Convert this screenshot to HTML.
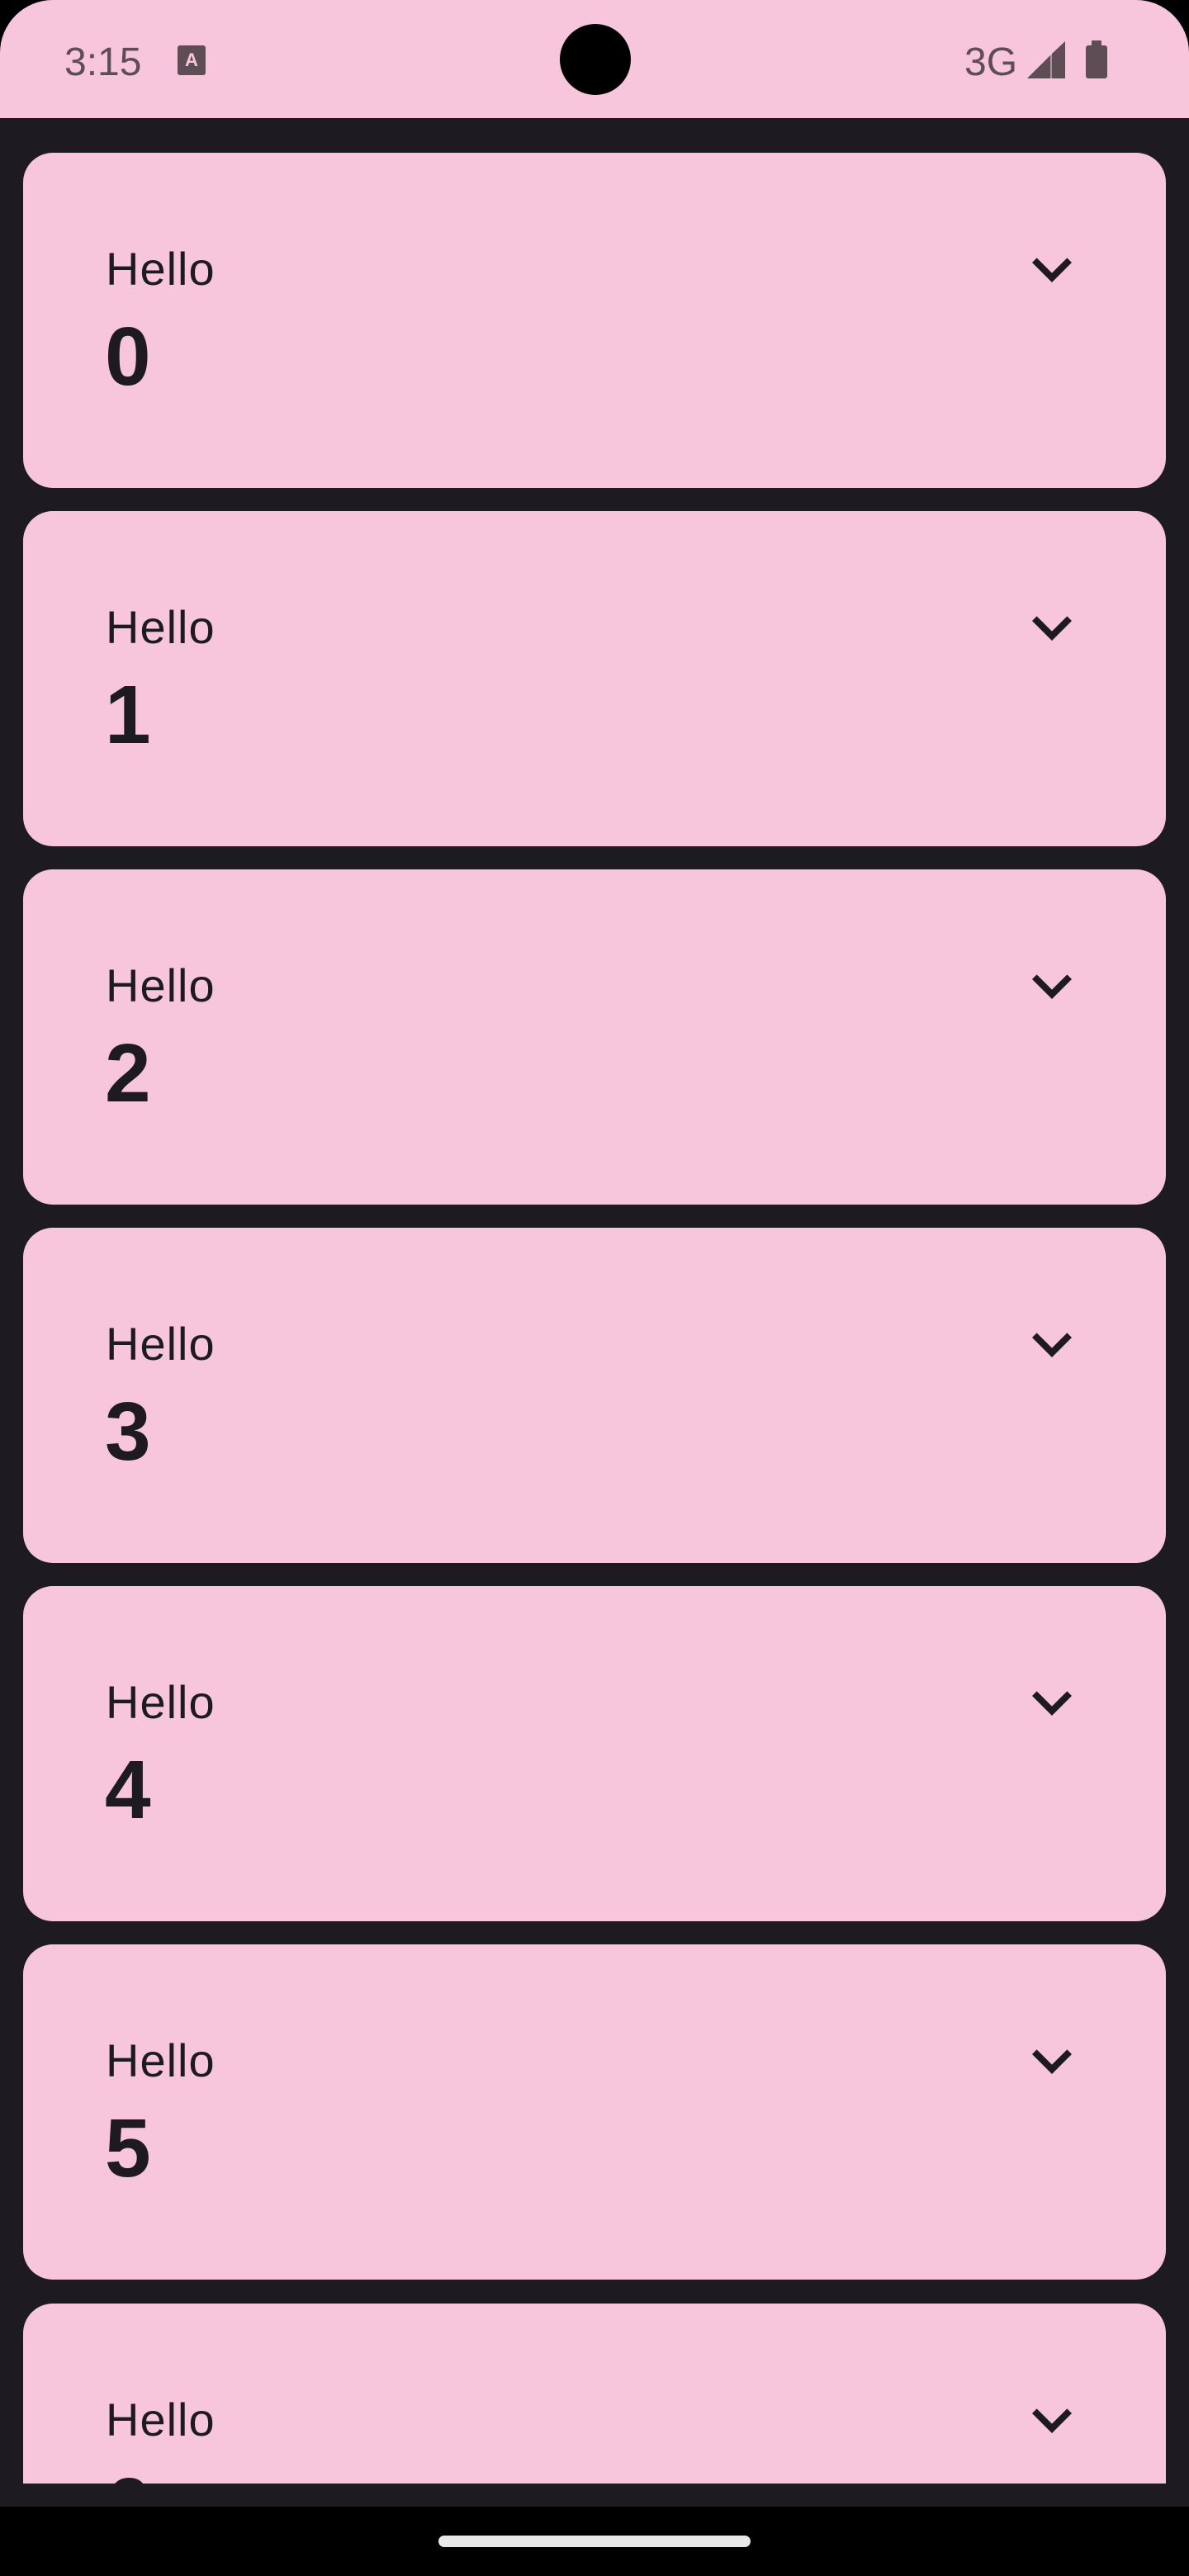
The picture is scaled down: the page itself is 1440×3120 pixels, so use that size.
<!DOCTYPE html>
<html><head><meta charset="utf-8"><style>
*{margin:0;padding:0;box-sizing:border-box}
body{width:1440px;height:3120px;background:#000;position:relative;overflow:hidden;font-family:"Liberation Sans",sans-serif}
.status{position:absolute;left:0;top:0;width:1440px;height:143px;background:#f7c6dc;border-radius:64px 64px 0 0}
.main{position:absolute;left:0;top:143px;width:1440px;height:2893px;background:#1d1b20;overflow:hidden}
.card{position:absolute;left:28px;width:1384px;height:406px;background:#f7c6dc;border-radius:36px}
.h{position:absolute;left:100px;top:113px;font-size:56px;line-height:1;color:#1d1b20;letter-spacing:1px}
.n{position:absolute;left:99px;top:197px;font-size:100px;font-weight:bold;line-height:1;color:#1d1b20}
.chev{position:absolute;left:1198px;top:93px}
.t{position:absolute;font-size:48px;line-height:1;color:#5f4d56}
</style></head><body>
<div class="status">
<div class="t" style="left:78px;top:52px">3:15</div>
<svg style="position:absolute;left:215px;top:55px" width="34" height="36" viewBox="0 0 34 36"><rect width="34" height="36" rx="3" fill="#5f4d56"/><text x="17" y="25" font-size="22" font-weight="bold" fill="#f7c6dc" text-anchor="middle" font-family="Liberation Sans">A</text></svg>
<div style="position:absolute;left:678px;top:29px;width:86px;height:86px;border-radius:50%;background:#000"></div>
<div class="t" style="left:1168px;top:52px">3G</div>
<svg style="position:absolute;left:1244px;top:50px" width="46" height="45" viewBox="0 0 46 45"><path d="M46 0V45H0Z" fill="#5f4d56" opacity=".45"/><path d="M46 0V45H30V15Z" fill="#5f4d56"/><path d="M28 17V45H0Z" fill="#5f4d56"/></svg>
<div style="position:absolute;left:1315px;top:55px;width:26px;height:40px;background:#5f4d56;border-radius:3px"></div>
<div style="position:absolute;left:1322px;top:49px;width:12px;height:8px;background:#5f4d56;border-radius:1px"></div>
</div>
<div class="main">
<div class="card" style="top:42px"><div class="h">Hello</div><div class="n">0</div><svg class="chev" width="96" height="96" viewBox="0 0 24 24"><path d="M7.41 8.59 12 13.17l4.59-4.58L18 10l-6 6-6-6z" fill="#1d1b20"/></svg></div>
<div class="card" style="top:476px"><div class="h">Hello</div><div class="n">1</div><svg class="chev" width="96" height="96" viewBox="0 0 24 24"><path d="M7.41 8.59 12 13.17l4.59-4.58L18 10l-6 6-6-6z" fill="#1d1b20"/></svg></div>
<div class="card" style="top:910px"><div class="h">Hello</div><div class="n">2</div><svg class="chev" width="96" height="96" viewBox="0 0 24 24"><path d="M7.41 8.59 12 13.17l4.59-4.58L18 10l-6 6-6-6z" fill="#1d1b20"/></svg></div>
<div class="card" style="top:1344px"><div class="h">Hello</div><div class="n">3</div><svg class="chev" width="96" height="96" viewBox="0 0 24 24"><path d="M7.41 8.59 12 13.17l4.59-4.58L18 10l-6 6-6-6z" fill="#1d1b20"/></svg></div>
<div class="card" style="top:1778px"><div class="h">Hello</div><div class="n">4</div><svg class="chev" width="96" height="96" viewBox="0 0 24 24"><path d="M7.41 8.59 12 13.17l4.59-4.58L18 10l-6 6-6-6z" fill="#1d1b20"/></svg></div>
<div class="card" style="top:2212px"><div class="h">Hello</div><div class="n">5</div><svg class="chev" width="96" height="96" viewBox="0 0 24 24"><path d="M7.41 8.59 12 13.17l4.59-4.58L18 10l-6 6-6-6z" fill="#1d1b20"/></svg></div>
<div style="position:absolute;left:0;top:2647px;width:1440px;height:218px;overflow:hidden">
<div class="card" style="top:0"><div class="h">Hello</div><div class="n">6</div><svg class="chev" width="96" height="96" viewBox="0 0 24 24"><path d="M7.41 8.59 12 13.17l4.59-4.58L18 10l-6 6-6-6z" fill="#1d1b20"/></svg></div>
</div>
</div>
<div style="position:absolute;left:531px;top:3071px;width:378px;height:14px;border-radius:7px;background:#e8e8e8"></div>
</body></html>
